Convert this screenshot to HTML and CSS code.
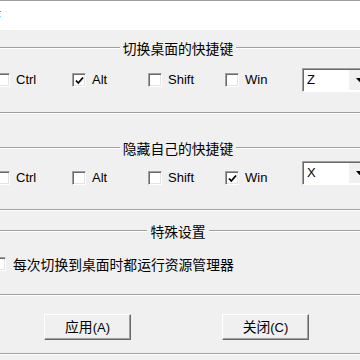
FILE: index.html
```html
<!DOCTYPE html>
<html>
<head>
<meta charset="utf-8">
<link rel="stylesheet" href="styles.css">
</head>
<body>
<div class="dialog">
  <div class="topbar"><span class="caption">程序</span></div>

  <div class="group-title t1"><span>切换桌面的快捷键</span></div>
  <div class="keys r1">
    <label class="check"><span class="box"></span><span class="lbl">Ctrl</span></label>
    <label class="check"><span class="box"><svg viewBox="0 0 11 11" width="11" height="11"><path d="M2 5.5 L4.3 8 L9 2.5" fill="none" stroke="#000" stroke-width="1.8"/></svg></span><span class="lbl">Alt</span></label>
    <label class="check"><span class="box"></span><span class="lbl">Shift</span></label>
    <label class="check"><span class="box"></span><span class="lbl">Win</span></label>
    <div class="combo"><span class="val">Z</span><span class="drop"><svg viewBox="0 0 7 4" width="7" height="4"><path d="M0 0 H7 L3.5 4 Z" fill="#000"/></svg></span></div>
  </div>
  <div class="sep s1"></div>

  <div class="group-title t2"><span>隐藏自己的快捷键</span></div>
  <div class="keys r2">
    <label class="check"><span class="box"></span><span class="lbl">Ctrl</span></label>
    <label class="check"><span class="box"></span><span class="lbl">Alt</span></label>
    <label class="check"><span class="box"></span><span class="lbl">Shift</span></label>
    <label class="check"><span class="box"><svg viewBox="0 0 11 11" width="11" height="11"><path d="M2 5.5 L4.3 8 L9 2.5" fill="none" stroke="#000" stroke-width="1.8"/></svg></span><span class="lbl">Win</span></label>
    <div class="combo"><span class="val">X</span><span class="drop"><svg viewBox="0 0 7 4" width="7" height="4"><path d="M0 0 H7 L3.5 4 Z" fill="#000"/></svg></span></div>
  </div>
  <div class="sep s2"></div>

  <div class="group-title t3"><span>特殊设置</span></div>
  <label class="check wide"><span class="box"></span><span class="cjk">每次切换到桌面时都运行资源管理器</span></label>
  <div class="sep s3"></div>

  <div class="buttons">
    <button class="btn">应用<span class="acc">(A)</span></button>
    <button class="btn">关闭<span class="acc">(C)</span></button>
  </div>
  <div class="sep s4"></div>
</div>
</body>
</html>
```

FILE: styles.css
```css
html, body {
  margin: 0;
  padding: 0;
  background: #f0f0f0;
  overflow: hidden;
}
body {
  width: 360px;
  height: 360px;
  font-family: "Liberation Sans", "Noto Sans CJK SC", sans-serif;
  font-size: 13px;
  color: #000;
}
.dialog {
  margin-left: -4px;
  width: 364px;
  display: flex;
  flex-direction: column;
}
.topbar {
  height: 29px;
  background: #fff;
  border-top: 1px solid #a0a0a0;
  margin-left: 4px;
  overflow: hidden;
}
.caption {
  display: inline-block;
  margin-left: -25px;
  margin-top: 5px;
  font-family: "Noto Sans CJK SC", sans-serif;
  font-size: 13px;
  line-height: 18px;
}
.group-title {
  display: flex;
  align-items: center;
  height: 20px;
  font-family: "Noto Sans CJK SC", sans-serif;
  font-size: 13.8px;
}
.group-title::before,
.group-title::after {
  content: "";
  flex: 1;
  height: 0;
  border-top: 1px solid #a0a0a0;
  border-bottom: 1px solid #fff;
}
.group-title span {
  padding: 0 3px;
  line-height: 20px;
}
.t1 { margin-top: 8px; }
.t2 { margin-top: 24px; }
.t3 { margin-top: 10px; }

.keys {
  display: grid;
  grid-template-columns: 76px 76px 77px 77px 1fr;
  align-items: center;
  height: 24px;
}
.r1 { margin-top: 10px; }
.r2 { margin-top: 5px; }
.r2 .check { margin-top: 5px; }

.check {
  display: flex;
  align-items: center;
}
.box {
  box-sizing: border-box;
  width: 14px;
  height: 14px;
  background: #fff;
  border-top: 1px solid #a0a0a0;
  border-left: 1px solid #a0a0a0;
  border-bottom: 1px solid #fff;
  border-right: 1px solid #fff;
  box-shadow: inset 1px 1px 0 #696969, inset -1px -1px 0 #e3e3e3;
  display: flex;
  align-items: center;
  justify-content: center;
  flex: none;
}
.box svg { display: block; margin: 1px 0 0 1px; }
.lbl {
  margin-left: 6px;
  line-height: 16px;
}
.combo {
  box-sizing: border-box;
  height: 24px;
  width: 64px;
  background: #fff;
  border-top: 1px solid #a0a0a0;
  border-left: 1px solid #a0a0a0;
  border-bottom: 1px solid #fff;
  border-right: 1px solid #fff;
  box-shadow: inset 1px 1px 0 #696969;
  display: flex;
  align-items: center;
}
.r2 .combo { margin-top: -4px; }
.val {
  flex: 1;
  padding-left: 4px;
  line-height: 16px;
}
.drop {
  width: 14px;
  height: 20px;
  margin-right: 2px;
  display: flex;
  align-items: center;
  justify-content: flex-end;
  background: #f0f0f0;
  border-left: 1px solid #fff;
}
.drop svg { display: block; }

.sep {
  height: 0;
  border-top: 1px solid #a0a0a0;
  border-bottom: 1px solid #fff;
}
.s1 { margin-top: 20px; }
.s2 { margin-top: 22px; }
.s3 { margin-top: 20px; }
.s4 { margin-top: 13px; }

.wide {
  margin-top: 13px;
  height: 20px;
  margin-left: -4px;
}
.cjk {
  margin-left: 7px;
  font-family: "Noto Sans CJK SC", sans-serif;
  font-size: 13.8px;
  line-height: 20px;
}

.buttons {
  display: flex;
  margin-top: 18px;
  padding-left: 48px;
  gap: 91px;
}
.btn {
  box-sizing: border-box;
  width: 87px;
  height: 26px;
  padding: 0;
  background: #f0f0f0;
  border-top: 1px solid #fff;
  border-left: 1px solid #fff;
  border-bottom: 1px solid #696969;
  border-right: 1px solid #696969;
  box-shadow: inset -1px -1px 0 #a0a0a0;
  font-family: "Noto Sans CJK SC", sans-serif;
  font-size: 13.8px;
  color: #000;
  line-height: 22px;
}
.acc {
  font-family: "Liberation Sans", sans-serif;
  font-size: 13px;
}
```
